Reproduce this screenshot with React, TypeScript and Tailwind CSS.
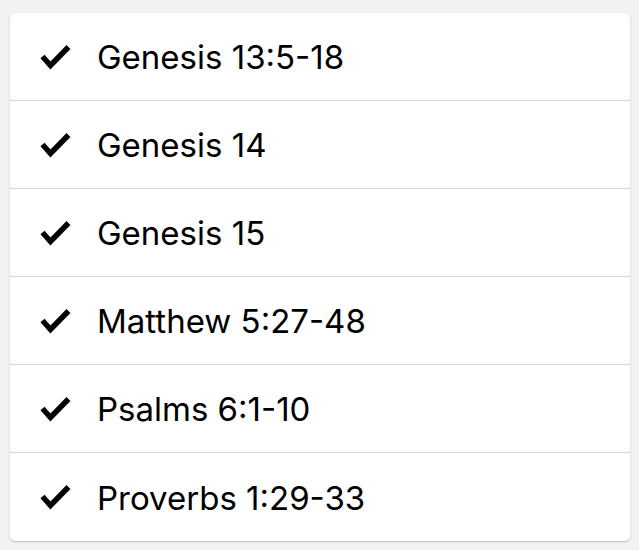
const readings = [
  'Genesis 13:5-18',
  'Genesis 14',
  'Genesis 15',
  'Matthew 5:27-48',
  'Psalms 6:1-10',
  'Proverbs 1:29-33',
]

function CheckMark() {
  return (
    <svg width="31" height="26" viewBox="0 0 31 26" className="shrink-0">
      <polyline points="2.5,12.5 10.5,21.5 28.5,3" fill="none" stroke="#000" strokeWidth="5.5" strokeLinejoin="miter" />
    </svg>
  )
}

export default function App() {
  return (
    <main className="min-h-[550px] bg-[#f2f2f2] pl-[10px] pr-[9px] pt-[13px] font-['Inter','Liberation_Sans',sans-serif]">
      <ul className="overflow-hidden rounded-[5px] bg-white shadow-[0_1px_2px_rgba(0,0,0,0.22)]">
        {readings.map((title, i) => (
          <li
            key={title}
            className={`flex h-[88px] items-center gap-[26px] pl-[30px] ${i < readings.length - 1 ? 'border-b border-[#d4d4d4]' : ''}`}
          >
            <CheckMark />
            <span className="pt-[2px] text-[33px] leading-none text-black">{title}</span>
          </li>
        ))}
      </ul>
    </main>
  )
}
